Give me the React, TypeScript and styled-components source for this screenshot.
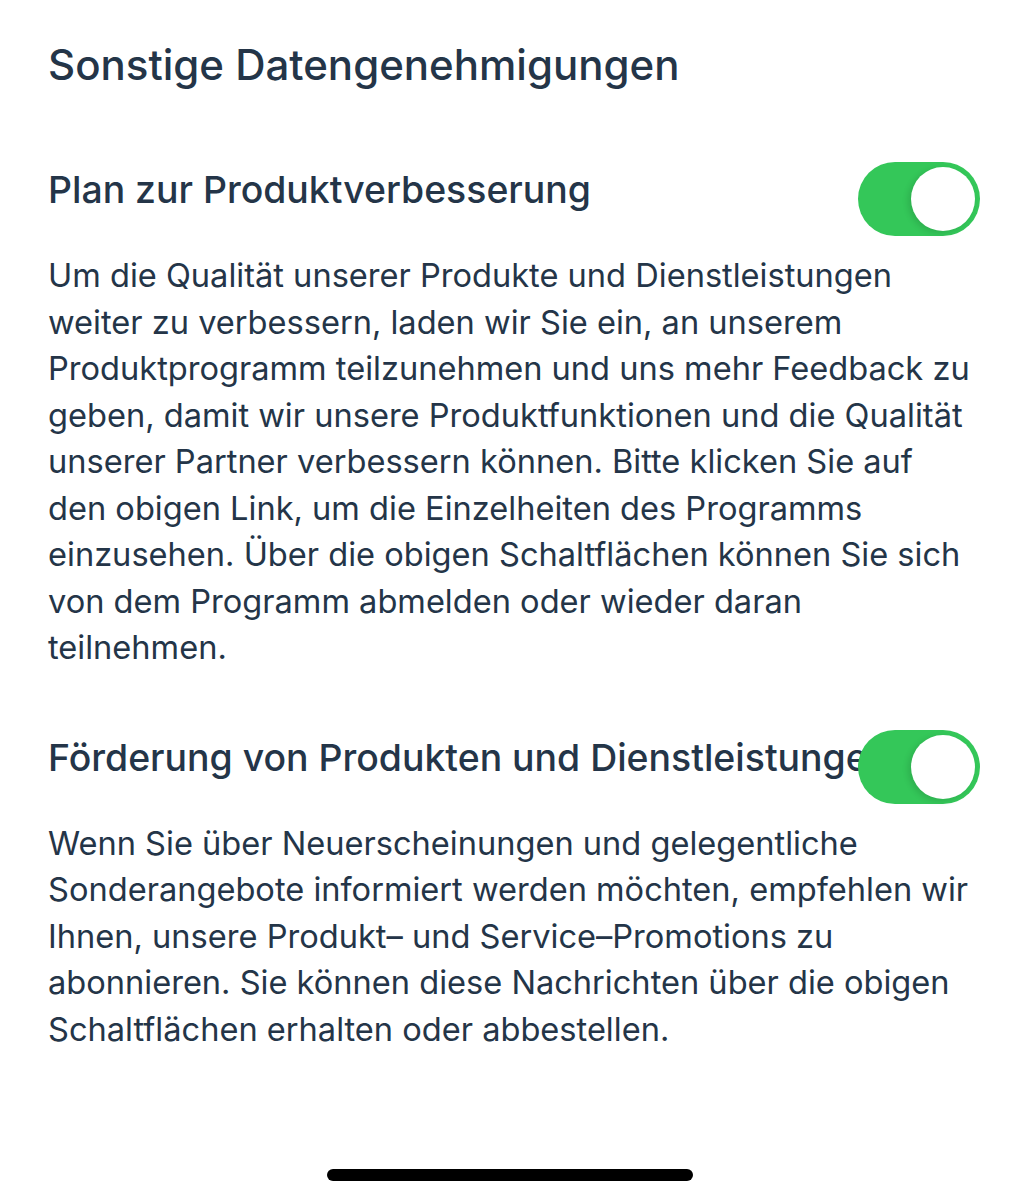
import React from "react";
import styled, { createGlobalStyle } from "styled-components";

const Global = createGlobalStyle`
  html, body { margin: 0; padding: 0; background: #ffffff; }
  body { font-family: "Inter", "Noto Sans", sans-serif; color: #243548; }
`;

const Page = styled.div`
  width: 1020px;
  height: 1200px;
  box-sizing: border-box;
  padding: 40px 40px 0 48px;
  display: flex;
  flex-direction: column;
  position: relative;
  overflow: hidden;
`;

const Heading = styled.h1`
  margin: 0;
  font-size: 42px;
  font-weight: 500;
  line-height: 50px;
  letter-spacing: 0;
`;

const Section = styled.section<{ $top: number }>`
  margin-top: ${(p) => p.$top}px;
  display: flex;
  flex-direction: column;
`;

const TitleRow = styled.div`
  display: flex;
  align-items: flex-start;
  height: 74px;
`;

const Title = styled.h2`
  margin: 0;
  flex: 1;
  min-width: 0;
  white-space: nowrap;
  font-size: 37.4px;
  font-weight: 500;
  line-height: 56px;
`;

const Toggle = styled.div<{ $on: boolean }>`
  position: relative;
  flex: none;
  width: 122px;
  height: 74px;
  border-radius: 37px;
  background: ${(p) => (p.$on ? "#34c759" : "#e5e5ea")};
`;

const Knob = styled.div<{ $on: boolean }>`
  position: absolute;
  top: 5px;
  left: ${(p) => (p.$on ? "53px" : "5px")};
  width: 64px;
  height: 64px;
  border-radius: 50%;
  background: #ffffff;
  box-shadow: -3px 2px 6px rgba(0, 0, 0, 0.12);
`;

const Body = styled.p`
  margin: 16px 0 0 0;
  font-size: 32.6px;
  font-weight: 400;
  line-height: 46.5px;
  white-space: nowrap;
`;

const HomeIndicator = styled.div`
  position: absolute;
  left: 327px;
  top: 1169px;
  width: 366px;
  height: 12px;
  border-radius: 6px;
  background: #000000;
`;

const body1 = [
  "Um die Qualität unserer Produkte und Dienstleistungen",
  "weiter zu verbessern, laden wir Sie ein, an unserem",
  "Produktprogramm teilzunehmen und uns mehr Feedback zu",
  "geben, damit wir unsere Produktfunktionen und die Qualität",
  "unserer Partner verbessern können. Bitte klicken Sie auf",
  "den obigen Link, um die Einzelheiten des Programms",
  "einzusehen. Über die obigen Schaltflächen können Sie sich",
  "von dem Programm abmelden oder wieder daran",
  "teilnehmen.",
];

const body2 = [
  "Wenn Sie über Neuerscheinungen und gelegentliche",
  "Sonderangebote informiert werden möchten, empfehlen wir",
  "Ihnen, unsere Produkt– und Service–Promotions zu",
  "abonnieren. Sie können diese Nachrichten über die obigen",
  "Schaltflächen erhalten oder abbestellen.",
];

const Lines = ({ lines }: { lines: string[] }) => (
  <>
    {lines.map((l, i) => (
      <React.Fragment key={i}>
        {l}
        {i < lines.length - 1 && <br />}
      </React.Fragment>
    ))}
  </>
);

export default function App() {
  return (
    <>
      <Global />
      <Page>
        <Heading>Sonstige Datengenehmigungen</Heading>
        <Section $top={72}>
          <TitleRow>
            <Title>Plan zur Produktverbesserung</Title>
            <Toggle $on>
              <Knob $on />
            </Toggle>
          </TitleRow>
          <Body>
            <Lines lines={body1} />
          </Body>
        </Section>
        <Section $top={59}>
          <TitleRow>
            <Title>Förderung von Produkten und Dienstleistungen</Title>
            <Toggle $on>
              <Knob $on />
            </Toggle>
          </TitleRow>
          <Body>
            <Lines lines={body2} />
          </Body>
        </Section>
        <HomeIndicator />
      </Page>
    </>
  );
}
